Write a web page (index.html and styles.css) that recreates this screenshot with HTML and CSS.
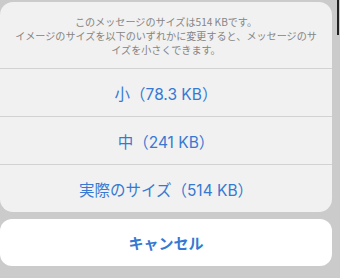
FILE: index.html
```html
<!DOCTYPE html>
<html lang="ja">
<head>
<meta charset="utf-8">
<link rel="stylesheet" href="styles.css">
</head>
<body>
<div class="screen">
  <div class="edge"></div>
  <div class="sheet">
    <div class="header">
      <div class="line">このメッセージのサイズは514 KBです。</div>
      <div class="line">イメージのサイズを以下のいずれかに変更すると、メッセージのサ</div>
      <div class="line">イズを小さくできます。</div>
    </div>
    <div class="option">小（78.3 KB）</div>
    <div class="option">中（241 KB）</div>
    <div class="option last">実際のサイズ（514 KB）</div>
  </div>
  <div class="cancel">キャンセル</div>
</div>
</body>
</html>
```
FILE: styles.css
```css
html, body {
  margin: 0;
  padding: 0;
}
body {
  background: #cbcbcb;
  width: 340px;
  height: 278px;
  overflow: hidden;
  font-family: "Inter", "Noto Sans CJK JP", sans-serif;
}
.screen {
  position: relative;
  padding: 2px 8px 0 0;
  display: flex;
  flex-direction: column;
  gap: 7px;
}
.edge {
  position: absolute;
  left: 337px;
  top: 0;
  width: 1.5px;
  height: 35px;
  background: #222;
}
.sheet {
  width: 332px;
  background: #f1f1f1;
  border-radius: 13px;
  overflow: hidden;
  display: flex;
  flex-direction: column;
}
.header {
  padding: 13px 0 11px;
  border-bottom: 1px solid #d2d2d2;
  text-align: center;
  font-family: "Noto Sans CJK JP", sans-serif;
  font-size: 10.1px;
  line-height: 14px;
  color: #858585;
}
.line {
  white-space: nowrap;
}
.option {
  height: 47px;
  display: flex;
  align-items: center;
  justify-content: center;
  border-bottom: 1px solid #d2d2d2;
  color: #3579d3;
  font-size: 15.5px;
}
.option.last {
  border-bottom: none;
}
.cancel {
  width: 332px;
  height: 47px;
  background: #ffffff;
  border-radius: 12px;
  display: flex;
  align-items: center;
  justify-content: center;
  color: #3579d3;
  font-size: 15px;
  font-weight: 700;
}
```
